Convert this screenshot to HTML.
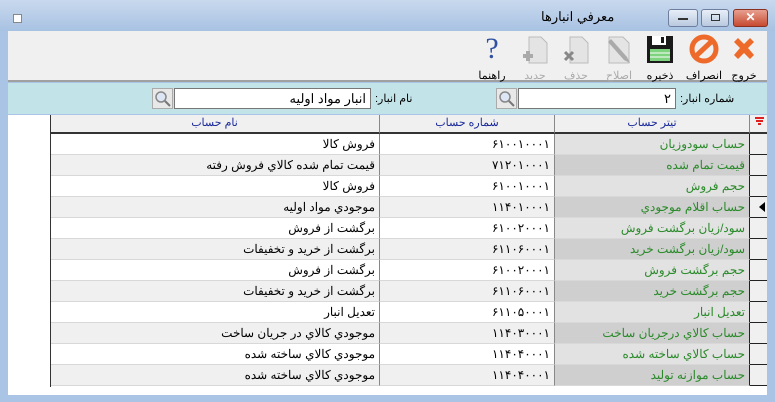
<!DOCTYPE html><html><head><meta charset="utf-8"><style>
*{margin:0;padding:0;box-sizing:border-box}
body{width:775px;height:402px;overflow:hidden;font-family:"Liberation Sans","Noto Sans CJK SC",sans-serif;font-size:12px;background:#a9c4e4;position:relative}
.a{position:absolute}
.tb{left:0;top:0;width:775px;height:31px;background:linear-gradient(#c9d9ee,#a8c2e2)}
.btn{top:9px;height:18px;border:1px solid #6d7f9c;border-radius:3px;background:linear-gradient(#e8eef8,#b9c9e0)}
.tool{top:33px;width:40px;text-align:center;font-size:11px;direction:rtl}
.tool .l{position:absolute;top:36px;left:0;width:40px;text-align:center}
.grid{left:8px;top:115px;width:759px;height:280px;background:#fff}
.cell{position:absolute;height:21px;line-height:20px;direction:rtl;text-align:right;padding-right:4px;border-bottom:1px solid #d8d8d8;white-space:nowrap;overflow:hidden}
.hd{position:absolute;top:0;height:19px;line-height:17px;text-align:center;color:#1a2a9a;font-size:11px;background:#f0f0f0;border-right:1px solid #888;border-bottom:2px solid #333}
</style></head><body>
<div class="a tb"></div>
<div class="a" style="left:13px;top:14px;width:9px;height:9px;background:#fff;border:1px solid #888"></div>
<div class="a" style="left:541px;top:9px;font-size:13px;direction:rtl">معرفي انبارها</div>
<div class="a btn" style="left:668px;width:30px"><div class="a" style="left:9px;top:8px;width:10px;height:2px;background:#333"></div></div>
<div class="a btn" style="left:701px;width:28px"><div class="a" style="left:9px;top:4px;width:9px;height:7px;border:1px solid #333"></div></div>
<div class="a btn" style="left:733px;width:35px;background:linear-gradient(#e8a090,#c74a30);border-color:#8a3020;color:#fff;text-align:center;font-weight:bold;line-height:15px">✕</div>
<div class="a" style="left:8px;top:31px;width:759px;height:51px;background:#f0f0f0;border-bottom:2px solid #a0a0a0"></div>
<div class="a" style="left:8px;top:83px;width:759px;height:31px;background:#c2e3e8"></div>
<!-- tools -->
<div class="a tool" style="left:724px"><svg width="32" height="32" viewBox="0 0 32 32"><path d="M6 9L10 5L16 11L22 5L26 9L20 15L26 22L22 26L16 20L10 26L6 22L12 15Z" fill="#ee6a2a"/></svg><div class="l">خروج</div></div>
<div class="a tool" style="left:684px"><svg width="32" height="32" viewBox="0 0 32 32"><circle cx="16" cy="16" r="12" fill="none" stroke="#ee6a2a" stroke-width="5"/><path d="M8 23L24 8" stroke="#ee6a2a" stroke-width="5"/></svg><div class="l">انصراف</div></div>
<div class="a tool" style="left:640px"><svg width="32" height="32" viewBox="0 0 32 32"><rect x="3" y="3" width="26" height="27" fill="#1a1a1a"/><rect x="8" y="3" width="14" height="9" fill="#fff"/><rect x="17" y="4" width="3" height="6" fill="#1a1a1a"/><rect x="6" y="16" width="20" height="12" fill="#7ed37e"/><path d="M6 20h20M6 24h20" stroke="#fff"/></svg><div class="l">ذخيره</div></div>
<div class="a tool" style="left:599px;color:#aaa"><svg width="32" height="32" viewBox="0 0 32 32"><path d="M6 4h14l6 6v20H6z" fill="#e4e4e4" stroke="#bbb"/><path d="M8 6L24 24L27 30L21 27L5 9Z" fill="#aaa"/></svg><div class="l">اصلاح</div></div>
<div class="a tool" style="left:556px;color:#aaa"><svg width="32" height="32" viewBox="0 0 32 32"><path d="M10 4h12l6 6v20H10z" fill="#e4e4e4" stroke="#bbb"/><path d="M5 19l8 8M13 19l-8 8" stroke="#888" stroke-width="3"/></svg><div class="l">حذف</div></div>
<div class="a tool" style="left:515px;color:#aaa"><svg width="32" height="32" viewBox="0 0 32 32"><path d="M10 4h12l6 6v20H10z" fill="#e4e4e4" stroke="#bbb"/><path d="M9 18v10M4 23h10" stroke="#aaa" stroke-width="4"/></svg><div class="l">جديد</div></div>
<div class="a tool" style="left:472px"><div style="font-family:'Liberation Serif',serif;font-size:30px;color:#3050a0;line-height:32px">?</div><div class="l">راهنما</div></div>
<!-- filters -->
<div class="a" style="left:680px;top:92px;direction:rtl;font-size:11px">شماره انبار:</div>
<div class="a" style="left:518px;top:88px;width:158px;height:21px;background:#fff;border:1px solid #777;direction:rtl;padding-right:4px;line-height:19px;font-size:13px">۲</div>
<div class="a" style="left:496px;top:88px;width:21px;height:21px;background:#e8e8e8;border:1px solid #aaa"><svg width="19" height="19"><circle cx="8" cy="8" r="5" fill="#dde6f5" stroke="#888" stroke-width="1.5"/><path d="M12 12l5 5" stroke="#777" stroke-width="2"/></svg></div>
<div class="a" style="left:375px;top:92px;direction:rtl;font-size:11px">نام انبار:</div>
<div class="a" style="left:174px;top:88px;width:197px;height:21px;background:#fff;border:1px solid #777;direction:rtl;padding-right:4px;line-height:19px;font-size:13px">انبار مواد اوليه</div>
<div class="a" style="left:152px;top:88px;width:21px;height:21px;background:#e8e8e8;border:1px solid #aaa"><svg width="19" height="19"><circle cx="8" cy="8" r="5" fill="#dde6f5" stroke="#888" stroke-width="1.5"/><path d="M12 12l5 5" stroke="#777" stroke-width="2"/></svg></div>
<div class="a grid" id="g">
<div class="hd" style="left:42px;width:330px">نام حساب</div>
<div class="hd" style="left:372px;width:175px">شماره حساب</div>
<div class="hd" style="left:547px;width:195px">تيتر حساب</div>
<div class="hd" style="left:742px;width:17px;border-right:none;background:#f0f0f0"><svg width="12" height="12"><path d="M2 3h9M3 6h7M5 9h3" stroke="#e02020" stroke-width="2"/></svg></div>
<div class="a" style="left:42px;top:0;width:1px;height:272px;background:#333"></div>
</div>
<script>
var d=[["حساب سودوزيان","۶۱۰۰۱۰۰۰۱","فروش كالا"],["قيمت تمام شده","۷۱۲۰۱۰۰۰۱","قيمت تمام شده كالاي فروش رفته"],["حجم فروش","۶۱۰۰۱۰۰۰۱","فروش كالا"],["حساب اقلام موجودي","۱۱۴۰۱۰۰۰۱","موجودي مواد اوليه"],["سود/زيان برگشت فروش","۶۱۰۰۲۰۰۰۱","برگشت از فروش"],["سود/زيان برگشت خريد","۶۱۱۰۶۰۰۰۱","برگشت از خريد و تخفيفات"],["حجم برگشت فروش","۶۱۰۰۲۰۰۰۱","برگشت از فروش"],["حجم برگشت خريد","۶۱۱۰۶۰۰۰۱","برگشت از خريد و تخفيفات"],["تعديل انبار","۶۱۱۰۵۰۰۰۱","تعديل انبار"],["حساب كالاي درجريان ساخت","۱۱۴۰۳۰۰۰۱","موجودي كالاي در جريان ساخت"],["حساب كالاي ساخته شده","۱۱۴۰۴۰۰۰۱","موجودي كالاي ساخته شده"],["حساب موازنه توليد","۱۱۴۰۴۰۰۰۱","موجودي كالاي ساخته شده"]];
var g=document.getElementById('g'),h='';
d.forEach(function(r,i){var t=19+i*21,alt=i%2==1;
h+='<div class="cell" style="left:43px;top:'+t+'px;width:329px;background:'+(alt?'#f0f0f0':'#fff')+';border-right:1px solid #888">'+r[2]+'</div>';
h+='<div class="cell" style="left:372px;top:'+t+'px;width:175px;background:'+(alt?'#f0f0f0':'#fff')+';border-right:1px solid #888;direction:ltr">'+r[1]+'</div>';
h+='<div class="cell" style="left:547px;top:'+t+'px;width:195px;color:#2a8a2a;background:'+(alt?'#cfcfcf':'#e2e2e2')+';border-right:1px solid #222">'+r[0]+'</div>';
h+='<div class="cell" style="left:742px;top:'+t+'px;width:17px;background:#f0f0f0;border-bottom:1px solid #222;padding:0">'+(i==3?'<svg width="10" height="20"><path d="M2 10l6-5v10z" fill="#000"/></svg>':'')+'</div>';});
g.insertAdjacentHTML('beforeend',h);
</script>
</body></html>
